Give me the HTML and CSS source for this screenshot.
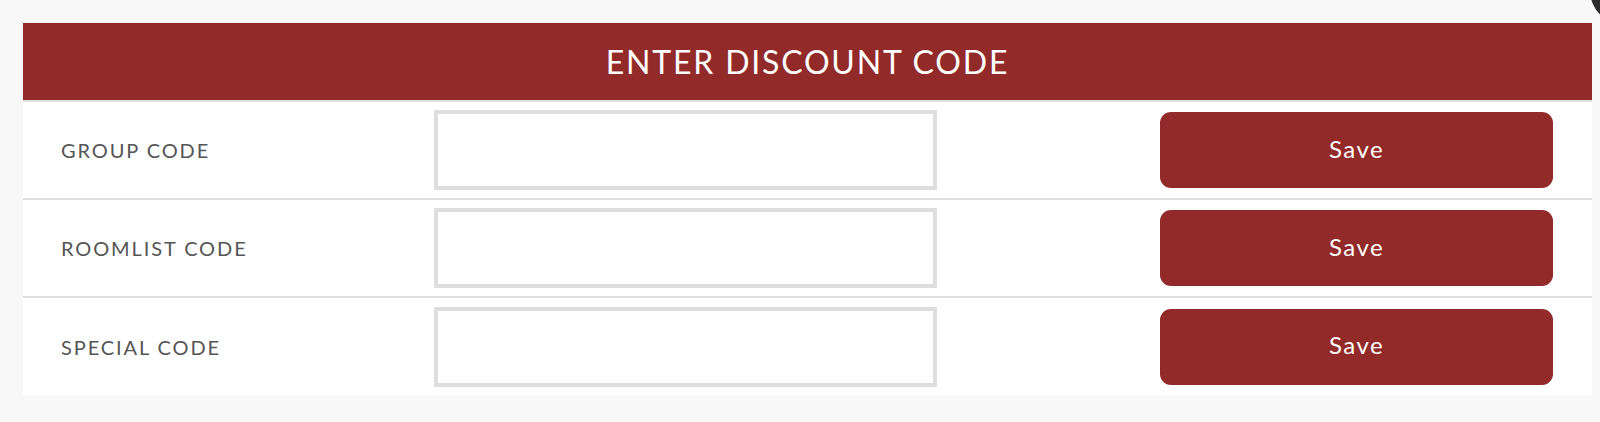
FILE: index.html
```html
<!DOCTYPE html>
<html lang="en">
<head>
  <meta charset="UTF-8">
  <title>Enter Discount Code</title>
  <link rel="stylesheet" href="styles.css">
</head>
<body>
  <span class="close-btn"></span>
  <div class="panel">
    <h2 class="panel-title">ENTER DISCOUNT CODE</h2>

    <div class="code-row">
      <label class="code-label" for="groupCode">GROUP CODE</label>
      <input type="text" id="groupCode" class="code-input">
      <span></span>
      <button class="save-btn">Save</button>
    </div>

    <div class="code-row">
      <label class="code-label" for="roomlistCode">ROOMLIST CODE</label>
      <input type="text" id="roomlistCode" class="code-input">
      <span></span>
      <button class="save-btn">Save</button>
    </div>

    <div class="code-row last">
      <label class="code-label" for="specialCode">SPECIAL CODE</label>
      <input type="text" id="specialCode" class="code-input">
      <span></span>
      <button class="save-btn">Save</button>
    </div>
  </div>
</body>
</html>
```

FILE: styles.css
```css
body {
  margin: 0;
  background: #f8f8f8;
  font-family: Lato, "Open Sans", sans-serif;
  overflow: hidden;
}
.close-btn {
  position: absolute;
  left: 1590px;
  top: -45px;
  width: 70px;
  height: 70px;
  border-radius: 50%;
  background: #2b2b2b;
}
.panel {
  margin: 23px 8px 0 23px;
  background: #fff;
}
.panel-title {
  margin: 0;
  height: 77px;
  line-height: 77px;
  background: #922a29;
  color: #fff;
  text-align: center;
  font-size: 32px;
  font-weight: 400;
  letter-spacing: 1.8px;
}
.code-row {
  display: grid;
  grid-template-columns: 411px 503px 1fr 393px;
  align-items: center;
  height: 96px;
  padding-right: 39px;
  border-top: 2px solid #e0e0e0;
}
.code-row.last {
  height: 97px;
}
.code-label {
  padding-left: 38px;
  font-size: 20px;
  color: #555;
  letter-spacing: 1.9px;
}
.code-input {
  box-sizing: border-box;
  height: 80px;
  width: 100%;
  margin: 0;
  border: 4px solid #dedede;
  background: #fff;
  outline: none;
}
.save-btn {
  height: 76px;
  padding: 0 0 4px;
  border: none;
  border-radius: 11px;
  background: #922a29;
  color: #fff;
  font-family: inherit;
  font-size: 24px;
  letter-spacing: 1.5px;
  cursor: pointer;
}
```
